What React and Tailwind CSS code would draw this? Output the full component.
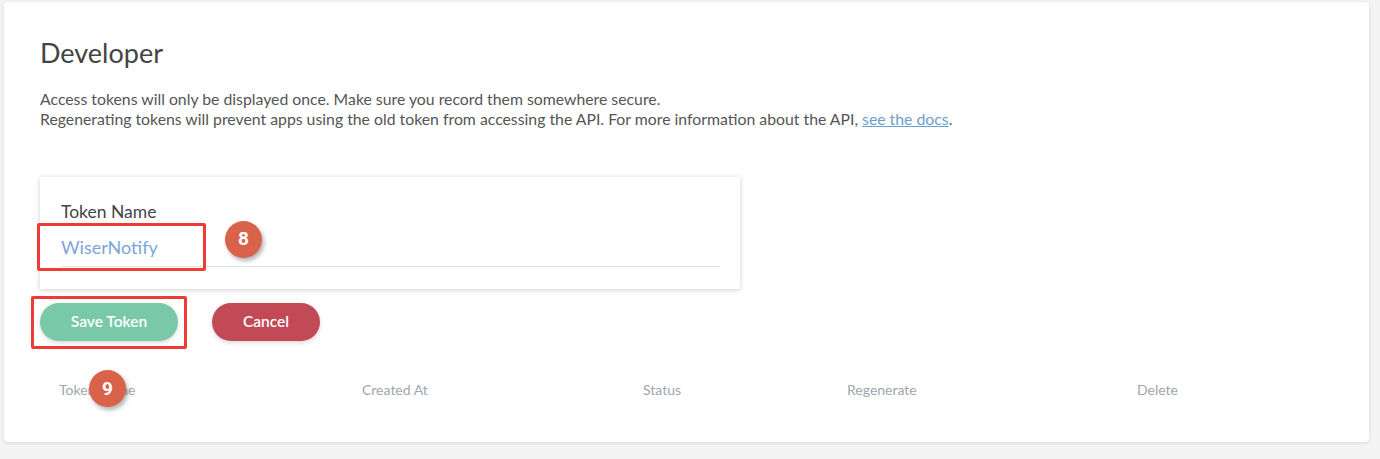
import React from "react";

function Badge({ n, className }) {
  return (
    <div
      className={
        "absolute w-[37px] h-[37px] rounded-full bg-[#d9634a] text-white flex items-center justify-center text-[19px] font-bold shadow-[2px_3px_4px_rgba(0,0,0,0.3)] " +
        className
      }
      style={{ fontFamily: "Roboto, 'Liberation Sans', sans-serif" }}
    >
      {n}
    </div>
  );
}

export default function App() {
  return (
    <div
      className="w-[1380px] h-[459px] bg-[#f4f4f4] pt-[2px] pl-[4px]"
      style={{ fontFamily: "Lato, 'Noto Sans', sans-serif" }}
    >
      <div className="relative w-[1365px] h-[440px] bg-white rounded-[4px] shadow-[0_1px_4px_rgba(0,0,0,0.12)] px-[36px] pt-[35px]">
        <h1 className="text-[27px] leading-[32px] text-[#444] font-normal">Developer</h1>
        <div className="mt-[20px] text-[15.8px] leading-[20px] text-[#555]">
          <p>Access tokens will only be displayed once. Make sure you record them somewhere secure.</p>
          <p>
            Regenerating tokens will prevent apps using the old token from accessing the API. For more information about the API,{" "}
            <a className="text-[#6a9fcf] underline" href="#">see the docs</a>.
          </p>
        </div>

        <div className="relative mt-[48px] w-[700px] h-[112px] bg-white shadow-[0_1px_5px_rgba(0,0,0,0.2)] pl-[21px] pr-[20px] pt-[23px]">
          <div className="text-[17.5px] leading-[24px] text-[#444]">Token Name</div>
          <div className="mt-[10px] text-[18px] leading-[26px] text-[#7ba6d3] border-b border-[#e2e2e2] pb-[6px]">
            WiserNotify
          </div>
          <div className="absolute left-[-3px] top-[46px] w-[169px] h-[48px] border-[3px] border-[#ef3b36] rounded-[2px]" />
          <Badge n="8" className="left-[185px] top-[44px]" />
        </div>

        <div className="relative mt-[14px] flex gap-[34px]">
          <button className="w-[138px] h-[38px] rounded-full bg-[#79c9a9] text-white text-[15.5px] font-semibold shadow-[0_2px_4px_rgba(0,0,0,0.15)]">
            Save Token
          </button>
          <button className="w-[108px] h-[38px] rounded-full bg-[#c24a57] text-white text-[15.5px] font-semibold shadow-[0_2px_4px_rgba(0,0,0,0.15)]">
            Cancel
          </button>
          <div className="absolute left-[-9px] top-[-7px] w-[156px] h-[53px] border-[3px] border-[#ef3b36] rounded-[2px]" />
        </div>

        <div className="relative mt-[39px] grid grid-cols-[303px_281px_204px_290px_1fr] pl-[19px] text-[14px] leading-[20px] text-[#a0a6ae]">
          <div>Token Name</div>
          <div>Created At</div>
          <div>Status</div>
          <div>Regenerate</div>
          <div>Delete</div>
          <Badge n="9" className="left-[49px] top-[-10px]" />
        </div>
      </div>
    </div>
  );
}
